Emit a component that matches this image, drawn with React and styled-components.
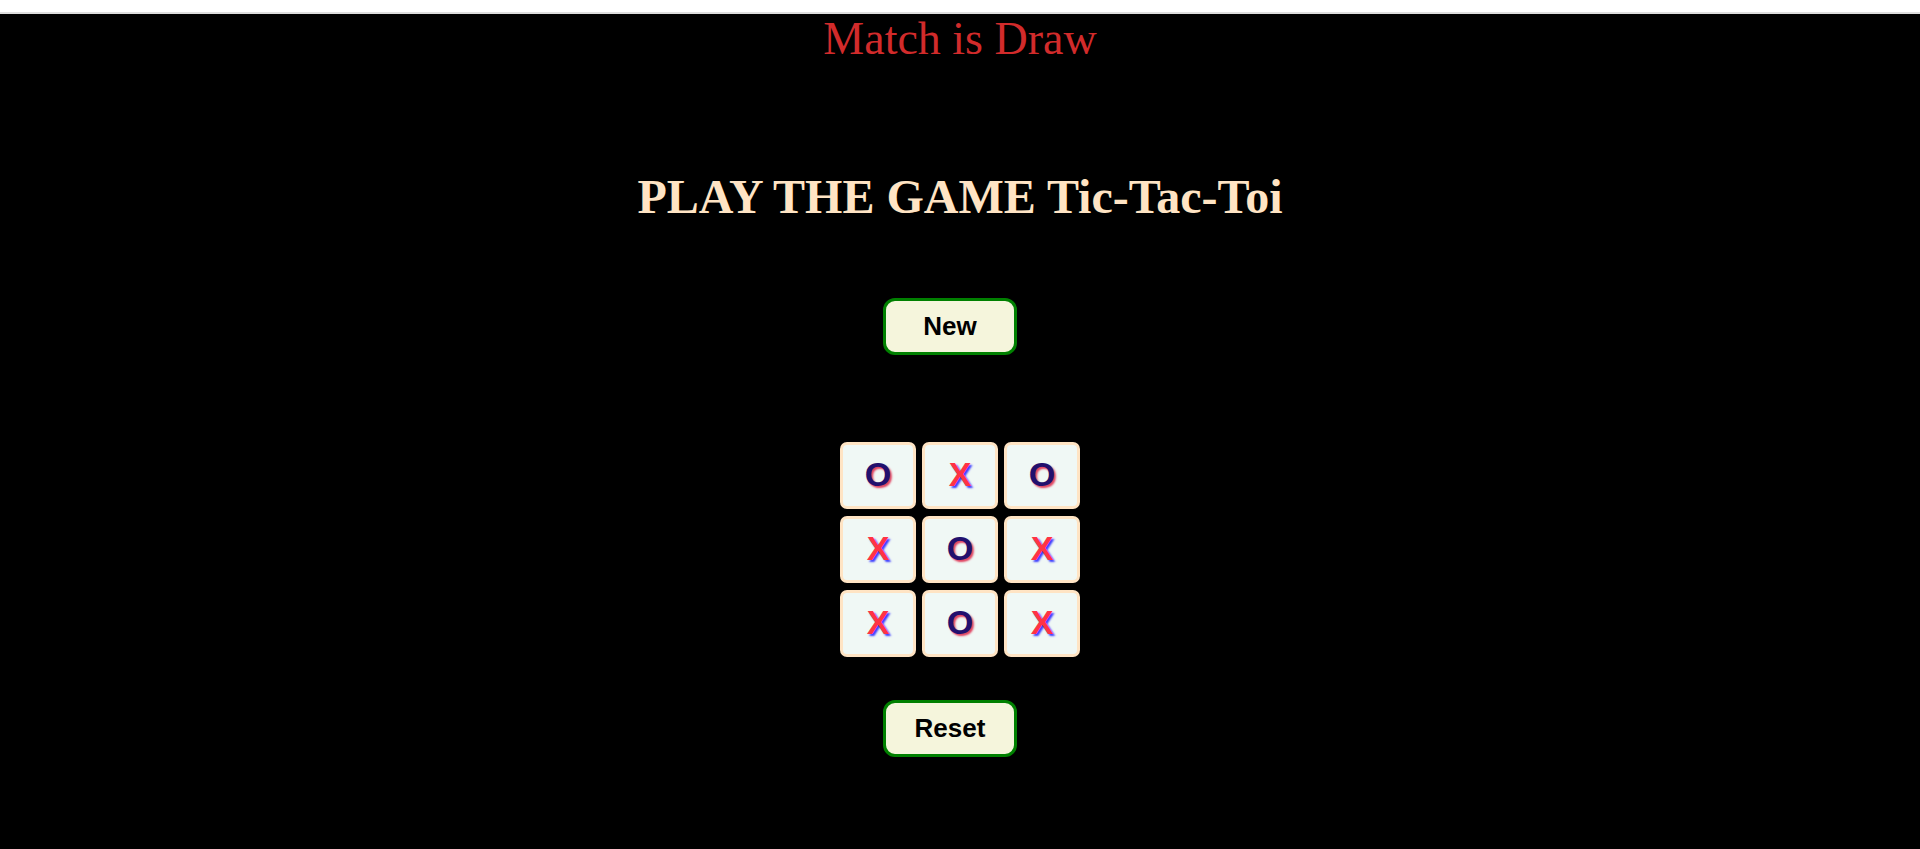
import React from 'react'
import styled, { createGlobalStyle } from 'styled-components'

const GlobalStyle = createGlobalStyle`
  html, body {
    margin: 0;
    padding: 0;
    background: #ffffff;
  }
`;

const Page = styled.div`
  margin-top: 12px;
  border-top: 2px solid #dedede;
  background: #000000;
  min-height: calc(100vh - 14px);
  display: flex;
  flex-direction: column;
  align-items: center;
`;

const Status = styled.div`
  margin: 0;
  font-family: "Liberation Serif", "Times New Roman", serif;
  font-size: 46px;
  line-height: 50px;
  color: #d22b2b;
`;

const Title = styled.h1`
  margin: 106px 0 0;
  font-family: "Liberation Serif", "Times New Roman", serif;
  font-weight: 700;
  font-size: 48px;
  line-height: 54px;
  color: #ffe4c4;
`;

const ActionButton = styled.button`
  margin-top: ${(p) => p.$top}px;
  margin-right: 20px;
  width: 134px;
  height: 57px;
  box-sizing: border-box;
  border: 3px solid #008000;
  border-radius: 12px;
  background: #f5f5dc;
  color: #000000;
  font-family: "Liberation Sans", Arial, sans-serif;
  font-weight: 700;
  font-size: 26px;
  padding: 0;
  cursor: pointer;
`;

const Board = styled.div`
  margin-top: 87px;
  display: grid;
  grid-template-columns: repeat(3, 76px);
  grid-auto-rows: 67px;
  column-gap: 6px;
  row-gap: 7px;
`;

const Cell = styled.div`
  box-sizing: border-box;
  border: 3px solid #ffe4c4;
  border-radius: 7px;
  background: #f0f8f5;
  display: flex;
  align-items: center;
  justify-content: center;
  padding-bottom: 3px;
  font-family: "Liberation Sans", Arial, sans-serif;
  font-weight: 700;
  font-size: 34px;
  color: ${(p) => (p.$mark === 'X' ? '#ff3344' : '#22106e')};
  text-shadow: ${(p) =>
    p.$mark === 'X' ? '2px 2px 2px #3b3bff' : '2px 2px 2px #e0405e'};
`;

const board = ['O', 'X', 'O', 'X', 'O', 'X', 'X', 'O', 'X'];

export default function App() {
  return (
    <>
      <GlobalStyle />
      <Page>
        <Status>Match is Draw</Status>
        <Title>PLAY THE GAME Tic-Tac-Toi</Title>
        <ActionButton $top={74}>New</ActionButton>
        <Board>
          {board.map((mark, i) => (
            <Cell key={i} $mark={mark}>{mark}</Cell>
          ))}
        </Board>
        <ActionButton $top={43}>Reset</ActionButton>
      </Page>
    </>
  )
}
